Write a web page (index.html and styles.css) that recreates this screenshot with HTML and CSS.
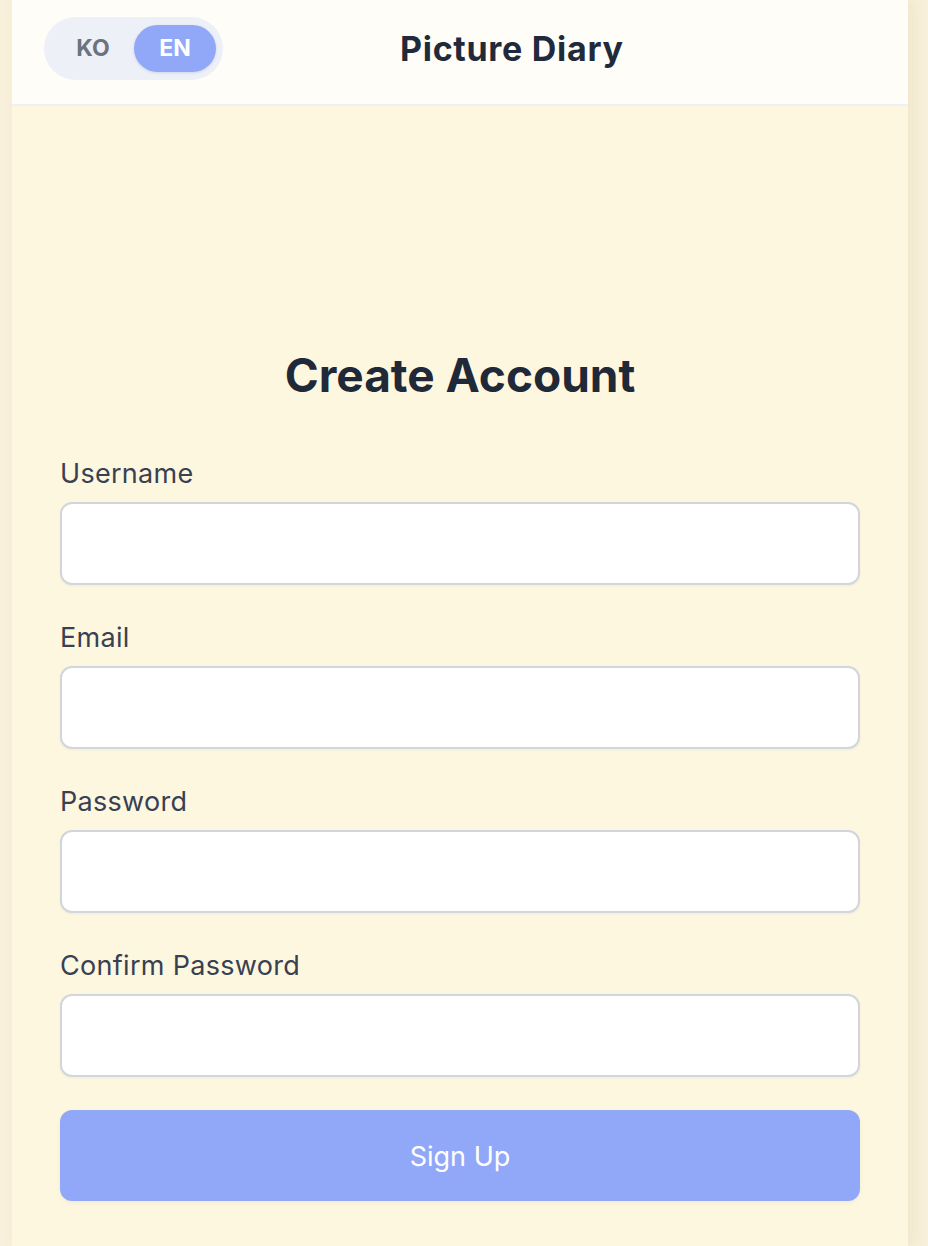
FILE: index.html
```html
<!DOCTYPE html>
<html lang="en">
<head>
<meta charset="utf-8">
<title>Picture Diary</title>
<link rel="stylesheet" href="styles.css">
</head>
<body>
<div class="app">
  <header class="header">
    <div class="lang-toggle">
      <button class="lang-btn">KO</button>
      <button class="lang-btn active">EN</button>
    </div>
    <h1 class="brand">Picture Diary</h1>
  </header>
  <main class="content">
    <form class="form">
      <h2 class="form-title">Create Account</h2>
      <div class="field">
        <label class="label" for="username">Username</label>
        <input class="input" id="username" type="text">
      </div>
      <div class="field">
        <label class="label" for="email">Email</label>
        <input class="input" id="email" type="email">
      </div>
      <div class="field">
        <label class="label" for="password">Password</label>
        <input class="input" id="password" type="password">
      </div>
      <div class="field">
        <label class="label" for="confirm">Confirm Password</label>
        <input class="input" id="confirm" type="password">
      </div>
      <button class="submit" type="button">Sign Up</button>
    </form>
  </main>
</div>
</body>
</html>
```
FILE: styles.css
```css
* { box-sizing: border-box; }
html, body {
  margin: 0;
  padding: 0;
  height: 100%;
}
body {
  background: #f8f0da;
  font-family: Inter, "Noto Sans", sans-serif;
  color: #1f2937;
}
.app {
  width: 896px;
  margin-left: 12px;
  min-height: 1246px;
  background: #fef7e0;
  box-shadow: 6px 0 14px rgba(180, 150, 80, 0.10);
}
.header {
  height: 106px;
  background: #fffdf7;
  border-bottom: 2px solid #eef0f5;
  display: flex;
  align-items: center;
  padding: 0 32px 8px;
  gap: 177px;
}
.lang-toggle {
  display: flex;
  padding: 8px 7px 8px 8px;
  background: #edf0f7;
  border-radius: 999px;
  width: 179px;
  height: 63px;
}
.lang-btn {
  flex: 1;
  border: none;
  background: transparent;
  border-radius: 999px;
  font-family: Inter, sans-serif;
  font-weight: 700;
  font-size: 23px;
  color: #6b7280;
  padding: 0;
  cursor: pointer;
}
.lang-btn.active {
  background: #91a8f8;
  color: #ffffff;
  box-shadow: 0 1px 3px rgba(80, 100, 180, 0.2);
}
.brand {
  margin: 0;
  font-size: 34px;
  font-weight: 700;
  color: #1f2a3b;
  letter-spacing: 0.7px;
}
.content {
  padding: 240px 48px 40px;
}
.form {
  display: flex;
  flex-direction: column;
}
.form-title {
  margin: 0 0 54px;
  text-align: center;
  font-size: 46px;
  line-height: 58px;
  font-weight: 700;
  color: #1f2937;
}
.field {
  display: flex;
  flex-direction: column;
  margin-bottom: 37px;
}
.field:last-of-type {
  margin-bottom: 33px;
}
.label {
  font-size: 27px;
  line-height: 32px;
  letter-spacing: 0.3px;
  color: #374151;
  margin-bottom: 12px;
}
.input {
  height: 83px;
  border: 2px solid #d1d5de;
  border-radius: 12px;
  background: #ffffff;
  box-shadow: 0 1px 3px rgba(0, 0, 0, 0.05);
  font-size: 24px;
  padding: 0 16px;
}
.submit {
  height: 91px;
  border: none;
  border-radius: 12px;
  background: #91a8f8;
  color: #ffffff;
  font-family: Inter, sans-serif;
  font-size: 27px;
  font-weight: 400;
  padding-top: 3px;
  box-shadow: 0 2px 4px rgba(120, 100, 60, 0.08);
}
```
